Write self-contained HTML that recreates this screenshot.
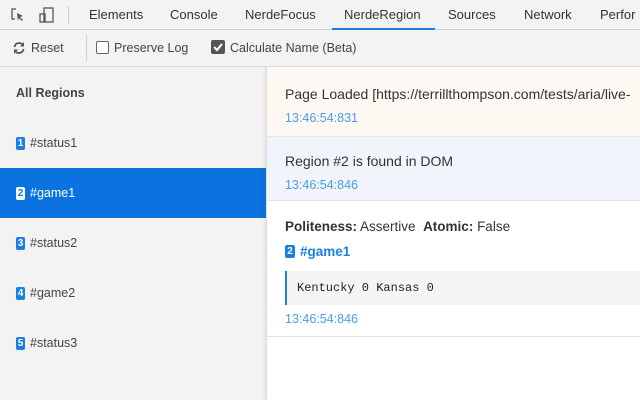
<!DOCTYPE html>
<html><head><style>
*{margin:0;padding:0;box-sizing:border-box}
body{width:640px;height:400px;overflow:hidden;font-family:"Liberation Sans",sans-serif;background:#fff;position:relative;font-size:13px;color:#333}
.abs{position:absolute}
.tabs{top:0;left:0;width:640px;height:30px;background:#f3f3f3;border-bottom:1px solid #d0d0d0}
.tab{position:absolute;top:7px;font-size:13px;color:#333}
.tb{top:30px;left:0;width:640px;height:37px;background:#f3f3f3;border-bottom:1px solid #ddd;font-size:12.5px;color:#444}
.side{top:67px;left:0;width:266px;height:333px;background:#f3f3f3}
.item{position:absolute;left:0;width:266px;height:50px;line-height:50px;padding-left:16px;font-size:12.5px;color:#444}
.badge{display:inline-block;width:9px;height:13px;background:#1a7fe0;color:#fff;border-radius:2px;font-size:10px;line-height:13px;text-align:center;font-weight:bold;vertical-align:middle;position:relative;top:0;margin-right:5px}
.sel{background:#0a73e0;color:#fff}
.sel .badge{background:#fff;color:#0a73e0}
.main{top:67px;left:266px;width:374px;height:333px;background:#fff;border-left:1px solid #ddd;box-shadow:-2px 0 3px rgba(0,0,0,.06);font-size:14px}
.ts{color:#4a9de6;font-size:12.5px}
</style></head><body>
<div class="abs tabs">
 <svg class="abs" style="left:10px;top:7px" width="16" height="16" viewBox="0 0 16 16"><path d="M6 2H2v10h3" fill="none" stroke="#555" stroke-width="1.3"/><path d="M7 6l6 3-3 1 3 3-1 1-3-3-1 3z" fill="#555"/></svg>
 <svg class="abs" style="left:38px;top:6px" width="18" height="18" viewBox="0 0 18 18"><rect x="6" y="2" width="9" height="14" fill="none" stroke="#555" stroke-width="1.3"/><rect x="2" y="8" width="5" height="8" fill="none" stroke="#555" stroke-width="1.3"/></svg>
 <div class="abs" style="left:68px;top:6px;width:1px;height:18px;background:#ccc"></div>
 <span class="tab" style="left:89px">Elements</span>
 <span class="tab" style="left:170px">Console</span>
 <span class="tab" style="left:245px">NerdeFocus</span>
 <span class="tab" style="left:344px">NerdeRegion</span>
 <div class="abs" style="left:332px;top:28px;width:103px;height:2px;background:#1a7fe0"></div>
 <span class="tab" style="left:448px">Sources</span>
 <span class="tab" style="left:524px">Network</span>
 <span class="tab" style="left:600px">Perfor</span>
</div>
<div class="abs tb">
 <svg class="abs" style="left:12px;top:11px" width="14" height="14" viewBox="0 0 14 14"><path d="M2.5 6A4.5 4.5 0 0 1 11 4.5M11.5 8A4.5 4.5 0 0 1 3 9.5" fill="none" stroke="#555" stroke-width="1.8"/><path d="M12 1v4.5H8z M2 13V8.5h4z" fill="#555"/></svg>
 <span class="abs" style="left:31px;top:11px">Reset</span>
 <div class="abs" style="left:86px;top:5px;width:1px;height:26px;background:#ccc"></div>
 <div class="abs" style="left:96px;top:11px;width:13px;height:13px;border:1px solid #666;border-radius:2px;background:#fff"></div>
 <span class="abs" style="left:114px;top:11px">Preserve Log</span>
 <div class="abs" style="left:211px;top:10px;width:14px;height:14px;background:#555;border-radius:2px"><svg width="14" height="14"><path d="M3 7l3 3 5-6" fill="none" stroke="#fff" stroke-width="2"/></svg></div>
 <span class="abs" style="left:230px;top:11px">Calculate Name (Beta)</span>
</div>
<div class="abs side">
 <div class="item" style="top:1px;font-weight:bold;color:#444">All Regions</div>
 <div class="item" style="top:51px"><span class="badge">1</span>#status1</div>
 <div class="item sel" style="top:101px"><span class="badge">2</span>#game1</div>
 <div class="item" style="top:151px"><span class="badge">3</span>#status2</div>
 <div class="item" style="top:201px"><span class="badge">4</span>#game2</div>
 <div class="item" style="top:251px"><span class="badge">5</span>#status3</div>
</div>
<div class="abs main">
 <div class="abs" style="top:0;left:0;width:374px;height:70px;background:#fdf8f2;border-bottom:1px solid #e6e6e6">
  <div class="abs" style="left:18px;top:19px;white-space:nowrap">Page Loaded [https://terrillthompson.com/tests/aria/live-</div>
  <div class="abs ts" style="left:18px;top:44px">13:46:54:831</div>
 </div>
 <div class="abs" style="top:70px;left:0;width:374px;height:64px;background:#f1f5fb;border-bottom:1px solid #e3e3e3">
  <div class="abs" style="left:18px;top:16px">Region #2 is found in DOM</div>
  <div class="abs ts" style="left:18px;top:41px">13:46:54:846</div>
 </div>
 <div class="abs" style="top:134px;left:0;width:374px;height:136px;border-bottom:1px solid #e3e3e3">
  <div class="abs" style="left:18px;top:18px;font-size:13.5px"><b>Politeness:</b> Assertive &nbsp;<b>Atomic:</b> False</div>
  <div class="abs" style="left:18px;top:43px;color:#1a7fe0;font-weight:bold;font-size:13.5px"><span class="badge" style="width:10px;top:-1px">2</span>#game1</div>
  <div class="abs" style="left:18px;top:70px;width:356px;height:34px;background:#f5f5f5;border-left:2px solid #1a7fe0;font-family:'Liberation Mono',monospace;font-size:12px;line-height:34px;padding-left:10px;color:#222">Kentucky 0 Kansas 0</div>
  <div class="abs ts" style="left:18px;top:111px">13:46:54:846</div>
 </div>
</div>
</body></html>
